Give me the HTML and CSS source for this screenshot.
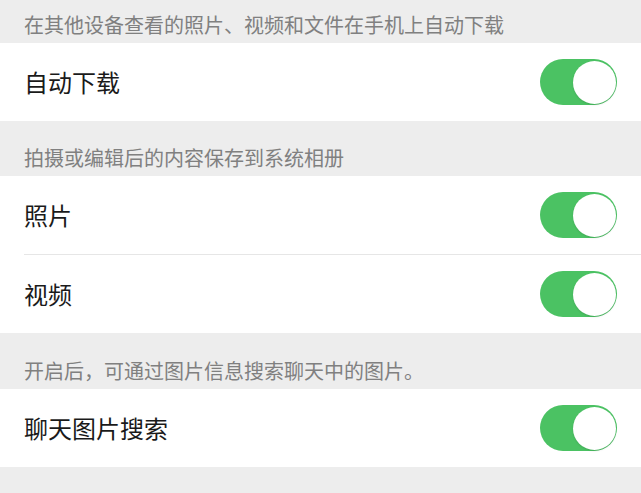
FILE: index.html
```html
<!DOCTYPE html>
<html lang="zh-CN">
<head>
<meta charset="utf-8">
<title>设置</title>
<link rel="stylesheet" href="styles.css">
</head>
<body>
<div class="page">
  <div class="tip tip-first">在其他设备查看的照片、视频和文件在手机上自动下载</div>
  <div class="group">
    <div class="row"><span class="label">自动下载</span><span class="switch"><span class="knob"></span></span></div>
  </div>

  <div class="tip">拍摄或编辑后的内容保存到系统相册</div>
  <div class="group">
    <div class="row"><span class="label">照片</span><span class="switch"><span class="knob"></span></span></div>
    <div class="row"><span class="label">视频</span><span class="switch"><span class="knob"></span></span></div>
  </div>

  <div class="tip tip-tall">开启后，可通过图片信息搜索聊天中的图片。</div>
  <div class="group">
    <div class="row"><span class="label">聊天图片搜索</span><span class="switch"><span class="knob"></span></span></div>
  </div>
</div>
</body>
</html>
```

FILE: styles.css
```css
html, body {
  margin: 0;
  padding: 0;
  background: #ededed;
}

.page {
  font-family: "Noto Sans CJK SC", "Noto Sans", sans-serif;
  width: 641px;
  min-height: 493px;
  background: #ededed;
}

.tip {
  box-sizing: border-box;
  height: 55px;
  padding: 0 24px 8px;
  display: flex;
  align-items: flex-end;
  font-size: 20px;
  line-height: 20px;
  color: #808080;
}

.tip-first {
  height: 43px;
}

.tip-tall {
  height: 56px;
}

.group {
  background: #ffffff;
  padding-left: 24px;
}

.row {
  box-sizing: border-box;
  height: 78px;
  padding-right: 24px;
  display: flex;
  align-items: center;
  justify-content: space-between;
}

.row + .row {
  height: 79px;
  border-top: 1px solid #e6e6e6;
}

.label {
  font-size: 24px;
  line-height: 24px;
  color: #1a1a1a;
}

.switch {
  box-sizing: border-box;
  width: 77px;
  height: 46px;
  border-radius: 23px;
  background: #4bc263;
  display: flex;
  align-items: center;
  justify-content: flex-end;
  padding: 0 1.5px;
}

.knob {
  width: 43px;
  height: 43px;
  border-radius: 50%;
  background: #ffffff;
  box-shadow: 0 1px 2px rgba(0, 0, 0, 0.12);
}
```
